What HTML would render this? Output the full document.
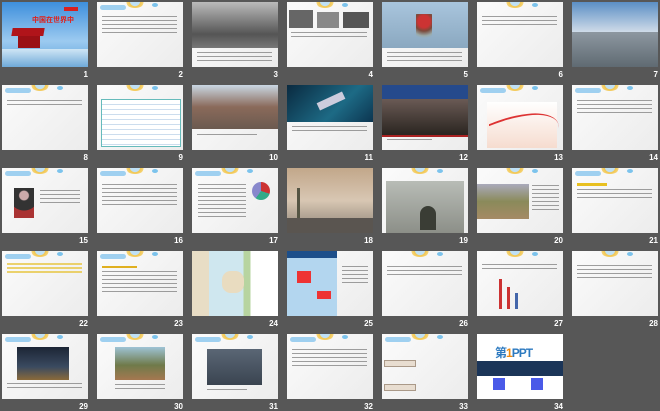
<!DOCTYPE html>
<html><head><meta charset="utf-8"><style>
body{margin:0;width:660px;height:410px;background:#575757;position:relative;overflow:hidden;font-family:"Liberation Sans","Noto Sans CJK SC",sans-serif}
.s{position:absolute;width:86px;height:65px;background:linear-gradient(135deg,#fbfbfb,#ececec);overflow:hidden}
.n{position:absolute;width:40px;text-align:right;color:#fff;font-size:8px;font-weight:bold}
.h:before{content:"";position:absolute;left:28px;top:-8px;width:20px;height:14px;border-radius:50%;background:radial-gradient(circle,#bfe0f5 40%,#f2c650 45%,#f6d57a 70%,transparent 72%)}
.h:after{content:"";position:absolute;left:55px;top:1px;width:6px;height:4px;border-radius:50%;background:#7cc3ec}
.lg{position:absolute;left:3px;top:3px;width:26px;height:5px;border-radius:3px;background:#9fd0f0}
.t{position:absolute;background:repeating-linear-gradient(#777 0 1px,transparent 1px 4px);opacity:.7}
.b{position:absolute}
</style></head><body>

<!-- row1 -->
<div class="s" style="left:2px;top:2px;background:linear-gradient(#3e8fdc,#9ccaf0 60%,#5aa0d8)">
<div class="b" style="left:10px;top:26px;width:32px;height:8px;background:#b0141a;transform:skewX(-10deg)"></div>
<div class="b" style="left:16px;top:34px;width:22px;height:12px;background:#9a1015"></div>
<div class="b" style="left:0;top:47px;width:86px;height:18px;background:linear-gradient(#cfe5f5,#6fa9d8)"></div>
<div class="b" style="left:30px;top:13px;font-size:7px;color:#e0201a;font-weight:bold">中国在世界中</div>
<div class="b" style="left:62px;top:5px;width:14px;height:4px;background:#d82020"></div>
</div>
<div class="s h" style="left:97px;top:2px"><div class="lg"></div><div class="t" style="left:5px;top:14px;width:75px;height:20px"></div></div>
<div class="s" style="left:192px;top:2px"><div class="b" style="left:0;top:0;width:86px;height:46px;background:linear-gradient(#bbb,#555 70%,#777)"></div><div class="t" style="left:5px;top:50px;width:75px;height:9px"></div></div>
<div class="s h" style="left:287px;top:2px"><div class="b" style="left:2px;top:8px;width:24px;height:18px;background:#666"></div><div class="b" style="left:30px;top:10px;width:22px;height:16px;background:#888"></div><div class="b" style="left:56px;top:10px;width:26px;height:16px;background:#555"></div><div class="t" style="left:4px;top:30px;width:76px;height:8px"></div></div>
<div class="s" style="left:382px;top:2px"><div class="b" style="left:0;top:0;width:86px;height:46px;background:linear-gradient(#a9c5dd,#8aa8c0)"></div><div class="b" style="left:34px;top:12px;width:16px;height:30px;background:radial-gradient(circle at 50% 25%,#c33 0 25%,#7a4a3a 40%,#9aa 60%,transparent 70%)"></div><div class="t" style="left:5px;top:50px;width:75px;height:9px"></div></div>
<div class="s h" style="left:477px;top:2px"><div class="t" style="left:5px;top:14px;width:75px;height:10px"></div></div>
<div class="s" style="left:572px;top:2px"><div class="b" style="left:0;top:0;width:86px;height:30px;background:linear-gradient(#5b8fc5,#cfdbe8)"></div><div class="b" style="left:0;top:30px;width:86px;height:35px;background:linear-gradient(#8d97a0,#5f6a72)"></div></div>

<!-- row2 -->
<div class="s h" style="left:2px;top:85px"><div class="lg"></div><div class="t" style="left:5px;top:15px;width:75px;height:7px"></div></div>
<div class="s h" style="left:97px;top:85px"><div class="b" style="left:4px;top:14px;width:78px;height:46px;border:1px solid #6bb;background:repeating-linear-gradient(#fff 0 4px,#cde 4px 5px)"></div></div>
<div class="s" style="left:192px;top:85px"><div class="b" style="left:0;top:0;width:86px;height:44px;background:linear-gradient(#c9d7e3,#8a6a5a 50%,#6b5a50)"></div><div class="t" style="left:5px;top:49px;width:60px;height:4px"></div></div>
<div class="s" style="left:287px;top:85px"><div class="b" style="left:0;top:0;width:86px;height:37px;background:linear-gradient(135deg,#0a2a40,#1d6a85 60%,#0c3550)"></div><div class="b" style="left:30px;top:12px;width:28px;height:8px;background:#ccd;transform:rotate(-25deg)"></div><div class="t" style="left:5px;top:41px;width:75px;height:8px"></div></div>
<div class="s" style="left:382px;top:85px"><div class="b" style="left:0;top:0;width:86px;height:14px;background:#254a8c"></div><div class="b" style="left:0;top:14px;width:86px;height:36px;background:linear-gradient(#6a5a55,#2a2520)"></div><div class="b" style="left:0;top:50px;width:86px;height:2px;background:#a22"></div><div class="t" style="left:5px;top:54px;width:45px;height:4px"></div></div>
<div class="s h" style="left:477px;top:85px"><div class="lg"></div><div class="b" style="left:10px;top:17px;width:70px;height:46px;background:linear-gradient(#fff,#f6dccf)"></div><div class="b" style="left:12px;top:25px;width:70px;height:30px;border-top:2px solid #d33;border-radius:0 100% 0 0;transform:skewY(-22deg)"></div></div>
<div class="s h" style="left:572px;top:85px"><div class="lg"></div><div class="t" style="left:5px;top:15px;width:75px;height:14px"></div></div>

<!-- row3 -->
<div class="s h" style="left:2px;top:168px"><div class="lg"></div><div class="b" style="left:12px;top:20px;width:20px;height:30px;background:radial-gradient(circle at 50% 25%,#caa 0 18%,#333 22% 60%,#a33 62%)"></div><div class="t" style="left:38px;top:22px;width:40px;height:14px"></div></div>
<div class="s h" style="left:97px;top:168px"><div class="lg"></div><div class="t" style="left:5px;top:16px;width:75px;height:24px"></div></div>
<div class="s h" style="left:192px;top:168px"><div class="lg"></div><div class="b" style="left:60px;top:14px;width:18px;height:18px;border-radius:50%;background:conic-gradient(#c33 0 30%,#3a8 0 60%,#88c 0)"></div><div class="t" style="left:6px;top:16px;width:48px;height:36px"></div></div>
<div class="s" style="left:287px;top:168px;background:linear-gradient(#c2a78a,#d8c7b3 50%,#8a7f73)"><div class="b" style="left:10px;top:20px;width:3px;height:30px;background:#554"></div><div class="b" style="left:0;top:50px;width:86px;height:15px;background:#5a5550"></div></div>
<div class="s h" style="left:382px;top:168px"><div class="b" style="left:4px;top:13px;width:78px;height:52px;background:linear-gradient(#b8bcb6,#8c8f88)"></div><div class="b" style="left:38px;top:38px;width:16px;height:24px;background:#3a3d35;border-radius:8px 8px 0 0"></div></div>
<div class="s h" style="left:477px;top:168px"><div class="b" style="left:0;top:16px;width:52px;height:35px;background:linear-gradient(#aab,#8a8a5a 50%,#a58a65)"></div><div class="t" style="left:55px;top:17px;width:27px;height:28px"></div></div>
<div class="s h" style="left:572px;top:168px"><div class="lg"></div><div class="b" style="left:5px;top:15px;width:30px;height:3px;background:#e8c020"></div><div class="t" style="left:5px;top:21px;width:75px;height:12px"></div></div>

<!-- row4 -->
<div class="s h" style="left:2px;top:251px"><div class="lg"></div><div class="b" style="left:5px;top:12px;width:75px;height:10px;background:repeating-linear-gradient(#e8c84a 0 2px,transparent 2px 4px);opacity:.8"></div></div>
<div class="s h" style="left:97px;top:251px"><div class="lg"></div><div class="b" style="left:5px;top:15px;width:35px;height:2px;background:#e0b020"></div><div class="t" style="left:5px;top:20px;width:75px;height:24px"></div></div>
<div class="s" style="left:192px;top:251px;background:linear-gradient(90deg,#e8ddc5 0 20%,#cfe7ef 20% 60%,#b7d4a0 60% 68%,#fff 68%)"><div class="b" style="left:30px;top:20px;width:22px;height:22px;background:#e9dcc0;border-radius:40%"></div></div>
<div class="s" style="left:287px;top:251px"><div class="b" style="left:0;top:0;width:50px;height:65px;background:#b3d6ef"></div><div class="b" style="left:0;top:0;width:50px;height:7px;background:#1d4f8a"></div><div class="b" style="left:10px;top:20px;width:14px;height:12px;background:#e33"></div><div class="b" style="left:30px;top:40px;width:14px;height:8px;background:#e33"></div><div class="t" style="left:55px;top:15px;width:26px;height:18px"></div></div>
<div class="s h" style="left:382px;top:251px"><div class="t" style="left:5px;top:15px;width:75px;height:10px"></div></div>
<div class="s h" style="left:477px;top:251px"><div class="t" style="left:5px;top:13px;width:75px;height:8px"></div><div class="b" style="left:22px;top:28px;width:3px;height:30px;background:#c33"></div><div class="b" style="left:30px;top:36px;width:3px;height:22px;background:#c33"></div><div class="b" style="left:38px;top:42px;width:3px;height:16px;background:#46a"></div></div>
<div class="s h" style="left:572px;top:251px"><div class="t" style="left:5px;top:14px;width:75px;height:14px"></div></div>

<!-- row5 -->
<div class="s h" style="left:2px;top:334px"><div class="lg"></div><div class="b" style="left:15px;top:13px;width:52px;height:33px;background:linear-gradient(#1c2535,#3a4a60 60%,#8a6a3a)"></div><div class="t" style="left:5px;top:49px;width:75px;height:6px"></div></div>
<div class="s h" style="left:97px;top:334px"><div class="lg"></div><div class="b" style="left:18px;top:13px;width:50px;height:33px;background:linear-gradient(#9ec3d5,#6f7a4a 55%,#a57850)"></div><div class="t" style="left:18px;top:50px;width:50px;height:6px"></div></div>
<div class="s h" style="left:192px;top:334px"><div class="lg"></div><div class="b" style="left:15px;top:15px;width:55px;height:36px;background:linear-gradient(#5a6675,#3a4450)"></div><div class="t" style="left:15px;top:55px;width:40px;height:3px"></div></div>
<div class="s h" style="left:287px;top:334px"><div class="lg"></div><div class="t" style="left:5px;top:15px;width:75px;height:18px"></div></div>
<div class="s h" style="left:382px;top:334px"><div class="lg"></div><div class="b" style="left:2px;top:26px;width:30px;height:5px;background:#e8ddd0;border:1px solid #a98"></div><div class="b" style="left:2px;top:50px;width:30px;height:5px;background:#e8ddd0;border:1px solid #a98"></div></div>
<div class="s" style="left:477px;top:334px;background:#fff"><div class="b" style="left:18px;top:10px;font-size:12px;font-weight:bold;color:#2d7ac0;letter-spacing:-1px">第<span style="color:#f08a10">1</span>PPT</div><div class="b" style="left:0;top:27px;width:86px;height:15px;background:#1b3558"></div><div class="b" style="left:16px;top:44px;width:12px;height:12px;background:#4a5ae8"></div><div class="b" style="left:54px;top:44px;width:12px;height:12px;background:#4a5ae8"></div></div>

<div class="n" style="left:48px;top:70px">1</div><div class="n" style="left:143px;top:70px">2</div><div class="n" style="left:238px;top:70px">3</div><div class="n" style="left:333px;top:70px">4</div><div class="n" style="left:428px;top:70px">5</div><div class="n" style="left:523px;top:70px">6</div><div class="n" style="left:618px;top:70px">7</div>
<div class="n" style="left:48px;top:153px">8</div><div class="n" style="left:143px;top:153px">9</div><div class="n" style="left:238px;top:153px">10</div><div class="n" style="left:333px;top:153px">11</div><div class="n" style="left:428px;top:153px">12</div><div class="n" style="left:523px;top:153px">13</div><div class="n" style="left:618px;top:153px">14</div>
<div class="n" style="left:48px;top:236px">15</div><div class="n" style="left:143px;top:236px">16</div><div class="n" style="left:238px;top:236px">17</div><div class="n" style="left:333px;top:236px">18</div><div class="n" style="left:428px;top:236px">19</div><div class="n" style="left:523px;top:236px">20</div><div class="n" style="left:618px;top:236px">21</div>
<div class="n" style="left:48px;top:319px">22</div><div class="n" style="left:143px;top:319px">23</div><div class="n" style="left:238px;top:319px">24</div><div class="n" style="left:333px;top:319px">25</div><div class="n" style="left:428px;top:319px">26</div><div class="n" style="left:523px;top:319px">27</div><div class="n" style="left:618px;top:319px">28</div>
<div class="n" style="left:48px;top:402px">29</div><div class="n" style="left:143px;top:402px">30</div><div class="n" style="left:238px;top:402px">31</div><div class="n" style="left:333px;top:402px">32</div><div class="n" style="left:428px;top:402px">33</div><div class="n" style="left:523px;top:402px">34</div>
</body></html>
